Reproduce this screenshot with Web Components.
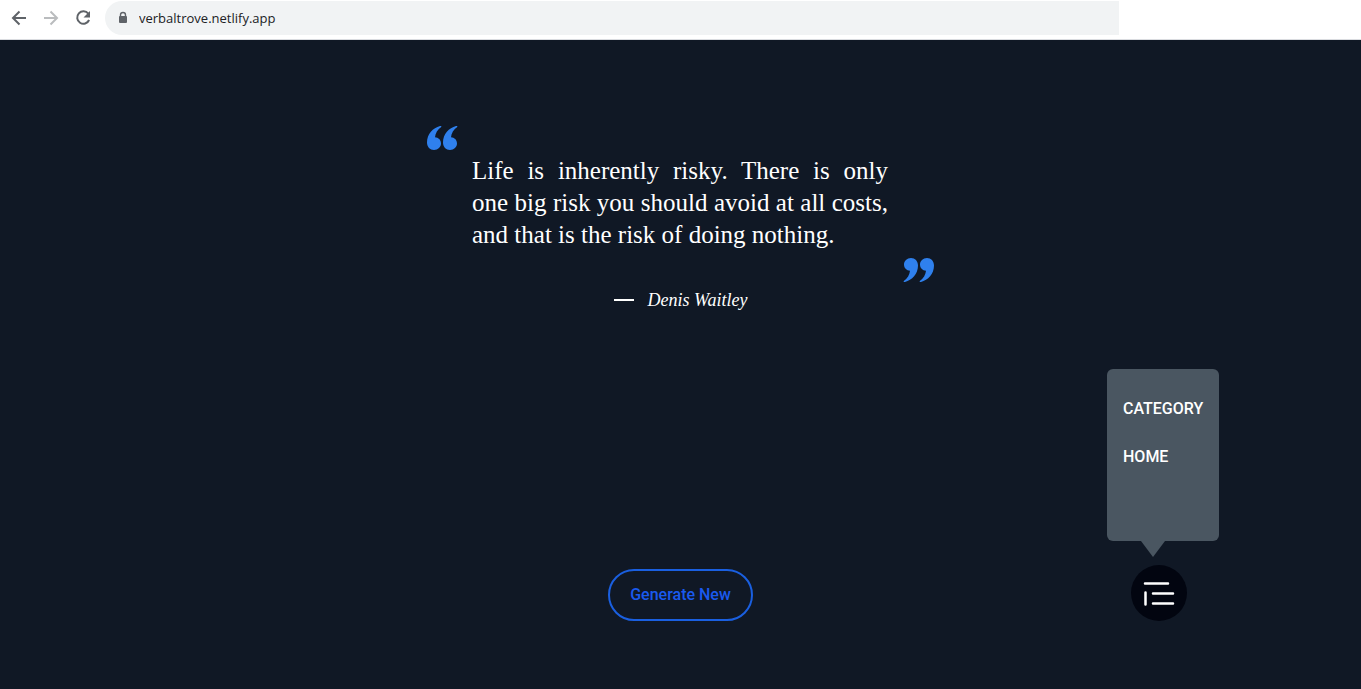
<!DOCTYPE html>
<html lang="en">
<head>
<meta charset="utf-8">
<title>Verbal Trove</title>
<style>
  html, body { margin: 0; background: #101825; }
  body { font-family: Roboto, sans-serif; color: #fff; }
</style>
</head>
<body>
<verbal-app></verbal-app>
<script>
const define = (name, html) => customElements.define(name, class extends HTMLElement {
  constructor() {
    super();
    const t = document.createElement('template');
    t.innerHTML = html;
    this.attachShadow({ mode: 'open' }).append(t.content.cloneNode(true));
  }
});

define('browser-bar', `
<style>
  :host { display: flex; align-items: center; box-sizing: border-box; height: 40px; padding: 0 242px 4px 8px; background: #fff; border-bottom: 1px solid #dadce0; }
  button { display: flex; border: 0; background: none; padding: 0; margin-right: 10px; color: #5f6368; }
  button:disabled { color: #babcbe; }
  button:last-of-type { margin-right: 11px; }
  label { flex: 1; display: flex; align-items: center; box-sizing: border-box; height: 34px; padding-left: 12px; gap: 10px; background: #f1f3f4; border-radius: 17px 0 0 17px; }
  input { flex: 1; min-width: 0; border: 0; padding: 0; background: none; outline: 0; color: #202124; font: 13px "Open Sans", sans-serif; }
</style>
<button aria-label="Back"><svg width="22" height="22" viewBox="0 0 22 22" fill="none" stroke="currentColor" stroke-width="2"><path d="M18 11H5M11.5 4.500L5 11l6.500 6.500"/></svg></button>
<button aria-label="Forward" disabled><svg width="22" height="22" viewBox="0 0 22 22" fill="none" stroke="currentColor" stroke-width="2"><path d="M4 11H17M10.500 4.500L17 11l-6.500 6.500"/></svg></button>
<button aria-label="Reload"><svg width="22" height="22" viewBox="0 0 22 22"><path d="M16.300 6.700A6.200 6.200 0 1 0 17.100 13" fill="none" stroke="currentColor" stroke-width="2"/><path d="M18 4v6.500h-6.500z" fill="currentColor"/></svg></button>
<label>
  <svg width="12" height="14" viewBox="0 0 12 14"><path d="M3.500 6V4a2.500 2.500 0 0 1 5 0v2" fill="none" stroke="#5f6368" stroke-width="1.400"/><rect x="2" y="5" width="8" height="7" rx="1" fill="#5f6368"/></svg>
  <input aria-label="Address" value="verbaltrove.netlify.app">
</label>`);

define('quote-mark', `
<style>
  :host { display: block; width: 31px; height: 24px; color: #2f80ed; }
  :host([closing]) { transform: rotate(180deg); }
  svg { display: block; }
</style>
<svg width="31" height="24" viewBox="0 0 31 24" fill="currentColor"><path d="M13 0C6 2 0 8 0 16.500C0 21 3 24 7 24C11 24 14 21 14 17.500C14 14 11.500 11.500 8 11.300C8.300 7.500 10.500 3.500 14.500 .8L14 0z"/><path d="M29 0C22 2 16 8 16 16.500C16 21 19 24 23 24C27 24 30 21 30 17.500C30 14 27.500 11.500 24 11.300C24.300 7.500 26.500 3.500 30.500 .8L30 0z"/></svg>`);

define('quote-card', `
<style>
  :host { display: block; width: 100%; max-width: 507px; }
  figure { display: flex; flex-direction: column; margin: 0; }
  blockquote { margin: 5px 46px 7px 45px; font: 25px/32px "Liberation Serif", serif; text-align: justify; }
  quote-mark[closing] { align-self: flex-end; }
  figcaption { display: flex; align-items: center; justify-content: center; gap: 14px; margin-top: 6px; font: italic 18px/24px "Liberation Serif", serif; }
  figcaption::before { content: ""; width: 20px; height: 2px; background: #fff; }
</style>
<figure>
  <quote-mark></quote-mark>
  <blockquote><slot></slot></blockquote>
  <quote-mark closing></quote-mark>
  <figcaption><slot name="author"></slot></figcaption>
</figure>`);

define('generate-button', `
<style>
  :host { display: block; }
  button { box-sizing: border-box; height: 52px; padding: 0 20px; border: 2px solid #1a5fe0; border-radius: 26px; background: none; color: #1a5aee; font: 500 16px/24px Roboto, sans-serif; }
</style>
<button><slot></slot></button>`);

define('float-menu', `
<style>
  :host { display: block; position: relative; }
  button { display: flex; align-items: center; justify-content: center; width: 56px; height: 56px; padding: 0; border: 0; border-radius: 50%; background: #020510; color: #fff; }
  nav { position: absolute; bottom: 80px; right: -32px; box-sizing: border-box; width: 112px; height: 172px; padding: 28px 16px; border-radius: 6px; background: #4a5661; display: flex; flex-direction: column; gap: 24px; }
  nav::after { content: ""; position: absolute; top: 100%; left: 34px; border: 12px solid transparent; border-top: 16px solid #4a5661; border-bottom: 0; }
  a { color: #fff; text-decoration: none; font: 500 16px/24px Roboto, sans-serif; }
</style>
<nav><a href="#category">CATEGORY</a><a href="#home">HOME</a></nav>
<button aria-label="Menu"><svg width="32" height="28" viewBox="0 0 32 28" fill="none" stroke="currentColor" stroke-width="2.500" stroke-linecap="round"><path d="M2 4.500H25M10 14.500H30M10 24.500H30M2.500 13.500V25.500"/></svg></button>`);

define('verbal-app', `
<style>
  :host { display: flex; flex-direction: column; min-height: 100vh; }
  main { flex: 1; display: flex; flex-direction: column; align-items: center; justify-content: space-between; box-sizing: border-box; padding: 86px 0 68px; }
  footer { width: 100%; display: grid; grid-template-columns: 1fr auto 1fr; align-items: end; }
  generate-button { grid-column: 2; }
  float-menu { justify-self: end; margin-right: 174px; }
</style>
<browser-bar></browser-bar>
<main>
  <quote-card>Life is inherently risky. There is only one&nbsp;big risk you should avoid at all costs, and&nbsp;that is the risk of doing nothing.<span slot="author">Denis Waitley</span></quote-card>
  <footer><generate-button>Generate New</generate-button><float-menu></float-menu></footer>
</main>`);
</script>
</body>
</html>
